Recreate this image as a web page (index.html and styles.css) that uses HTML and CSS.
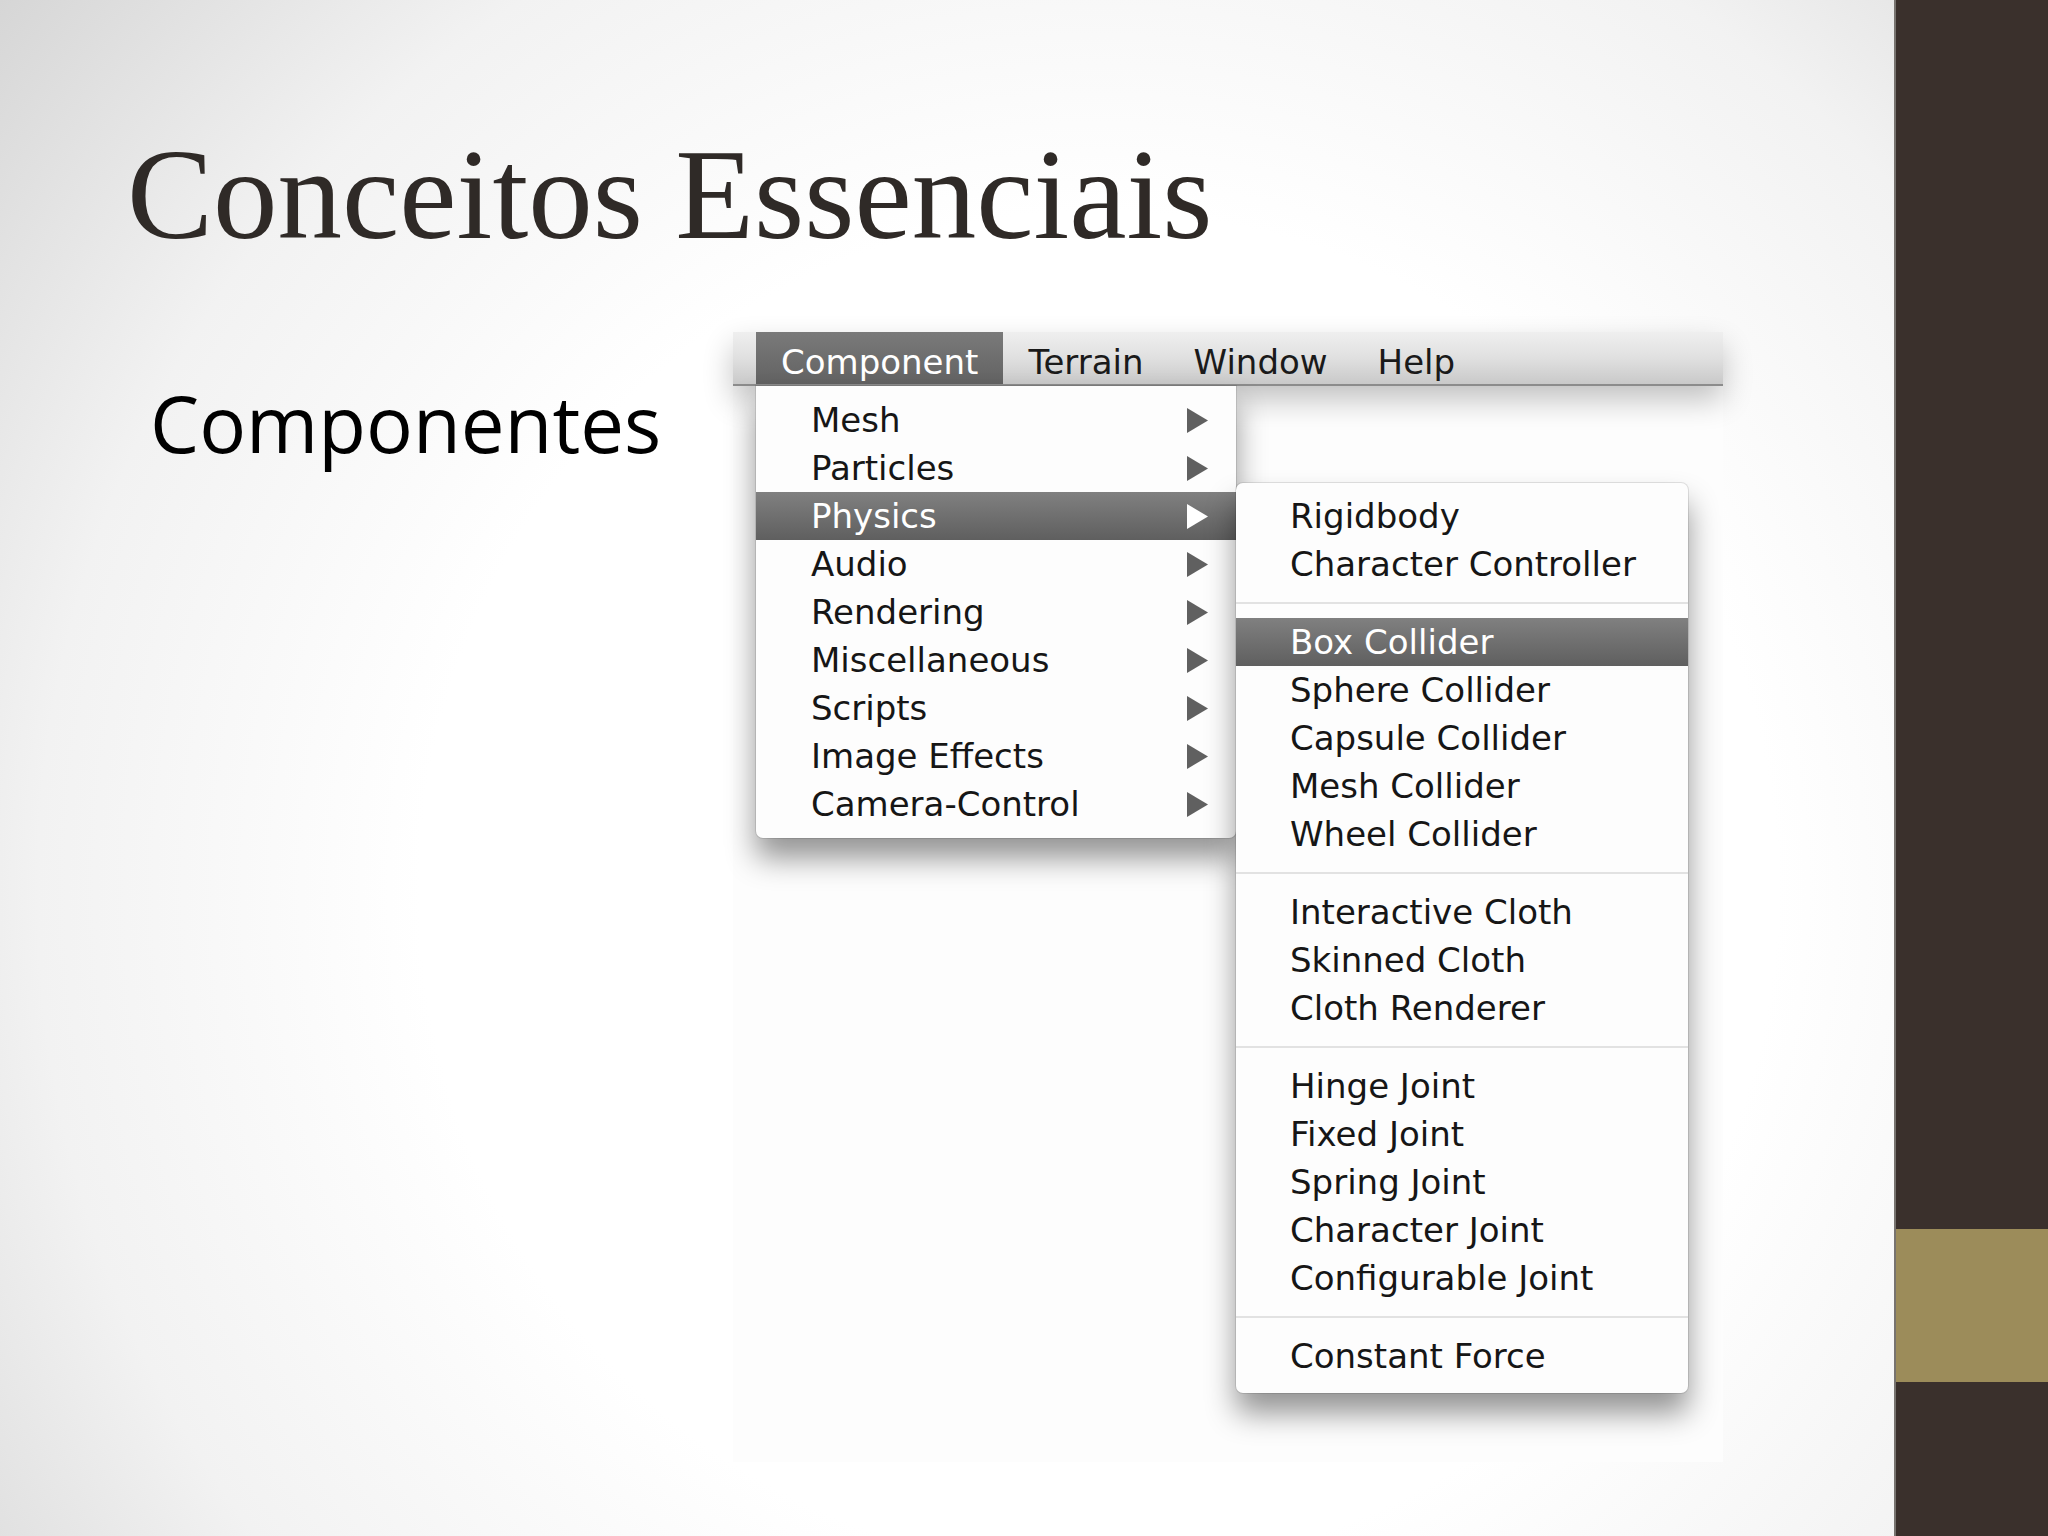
FILE: index.html
```html
<!DOCTYPE html>
<html lang="pt">
<head>
<meta charset="utf-8">
<title>Conceitos Essenciais</title>
<link rel="stylesheet" href="styles.css">
</head>
<body>
<div class="slide">
  <main class="content">
    <h1 class="title">Conceitos Essenciais</h1>
    <div class="body">
      <p class="bullet">Componentes</p>
      <div class="shot">
        <div class="menubar">
          <span class="mb-item active">Component</span>
          <span class="mb-item">Terrain</span>
          <span class="mb-item">Window</span>
          <span class="mb-item">Help</span>
        </div>
        <div class="menus">
          <ul class="menu dropdown">
            <li class="item">Mesh<svg class="arrow" viewBox="0 0 21 25"><polygon points="0,0 21,12.5 0,25"/></svg></li>
            <li class="item">Particles<svg class="arrow" viewBox="0 0 21 25"><polygon points="0,0 21,12.5 0,25"/></svg></li>
            <li class="item sel">Physics<svg class="arrow" viewBox="0 0 21 25"><polygon points="0,0 21,12.5 0,25"/></svg></li>
            <li class="item">Audio<svg class="arrow" viewBox="0 0 21 25"><polygon points="0,0 21,12.5 0,25"/></svg></li>
            <li class="item">Rendering<svg class="arrow" viewBox="0 0 21 25"><polygon points="0,0 21,12.5 0,25"/></svg></li>
            <li class="item">Miscellaneous<svg class="arrow" viewBox="0 0 21 25"><polygon points="0,0 21,12.5 0,25"/></svg></li>
            <li class="item">Scripts<svg class="arrow" viewBox="0 0 21 25"><polygon points="0,0 21,12.5 0,25"/></svg></li>
            <li class="item">Image Effects<svg class="arrow" viewBox="0 0 21 25"><polygon points="0,0 21,12.5 0,25"/></svg></li>
            <li class="item">Camera-Control<svg class="arrow" viewBox="0 0 21 25"><polygon points="0,0 21,12.5 0,25"/></svg></li>
          </ul>
          <ul class="menu submenu">
            <li class="item">Rigidbody</li>
            <li class="item">Character Controller</li>
            <li class="sep"></li>
            <li class="item sel">Box Collider</li>
            <li class="item">Sphere Collider</li>
            <li class="item">Capsule Collider</li>
            <li class="item">Mesh Collider</li>
            <li class="item">Wheel Collider</li>
            <li class="sep"></li>
            <li class="item">Interactive Cloth</li>
            <li class="item">Skinned Cloth</li>
            <li class="item">Cloth Renderer</li>
            <li class="sep"></li>
            <li class="item">Hinge Joint</li>
            <li class="item">Fixed Joint</li>
            <li class="item">Spring Joint</li>
            <li class="item">Character Joint</li>
            <li class="item">Configurable Joint</li>
            <li class="sep"></li>
            <li class="item">Constant Force</li>
          </ul>
        </div>
      </div>
    </div>
  </main>
  <aside class="side">
    <div class="gold"></div>
  </aside>
</div>
</body>
</html>
```
FILE: styles.css
```css
html, body {
  margin: 0;
  padding: 0;
}

body {
  width: 2048px;
  height: 1536px;
  overflow: hidden;
}

.slide {
  display: flex;
  width: 2048px;
  height: 1536px;
}

.content {
  flex: 0 0 1894px;
  height: 1536px;
  box-sizing: border-box;
  padding: 130px 0 0 127px;
  background: radial-gradient(circle farthest-corner at 58% 58%, #ffffff 0%, #ffffff 48%, #f2f2f2 75%, #d6d6d6 100%);
}

.title {
  margin: 0;
  font-family: "Liberation Serif", "Times New Roman", serif;
  font-weight: normal;
  font-size: 129px;
  line-height: 130px;
  color: #2f2a27;
  white-space: nowrap;
}

.body {
  display: flex;
  align-items: flex-start;
  margin-top: 72px;
}

.bullet {
  flex: 0 0 583px;
  margin: 44px 0 0 23px;
  font-family: "Open Sans", "Liberation Sans", sans-serif;
  font-size: 78px;
  line-height: 94px;
  color: #000;
}

/* screenshot of the Unity menu */
.shot {
  flex: 0 0 990px;
  height: 1130px;
  background: #fdfdfd;
  font-family: "DejaVu Sans", "Liberation Sans", sans-serif;
  font-size: 34px;
  color: #161616;
}

.menubar {
  display: flex;
  height: 54px;
  box-sizing: border-box;
  padding-left: 23px;
  background: linear-gradient(#efefef, #e0e0e0 50%, #c9c9c9);
  border-bottom: 2px solid #8c8c8c;
  box-shadow: 0 14px 30px rgba(0, 0, 0, 0.24);
}

.mb-item {
  padding: 8px 25px 0 25px;
  line-height: 44px;
  color: #1a1a1a;
}

.mb-item.active {
  background: linear-gradient(#7a7a7a, #626262);
  color: #fff;
}

.menus {
  display: flex;
  align-items: flex-start;
  position: relative;
  z-index: 1;
}

.menu {
  list-style: none;
  margin: 0;
  background: #fdfdfd;
  box-sizing: border-box;
}

.dropdown {
  width: 480px;
  margin-left: 23px;
  padding: 10px 0 10px 0;
  border-radius: 0 0 7px 7px;
  box-shadow: 0 20px 30px rgba(0, 0, 0, 0.42), 0 0 0 1px rgba(0, 0, 0, 0.1);
}

.submenu {
  width: 452px;
  margin-top: 97px;
  padding: 9px 0 13px 0;
  border-radius: 7px;
  box-shadow: 0 20px 30px rgba(0, 0, 0, 0.42), 0 0 0 1px rgba(0, 0, 0, 0.1);
  position: relative;
  z-index: 1;
}

.item {
  display: flex;
  align-items: center;
  justify-content: space-between;
  height: 48px;
  line-height: 48px;
  padding: 0 28px 0 55px;
  white-space: nowrap;
}

.submenu .item {
  padding-left: 54px;
}

.item.sel {
  background: linear-gradient(#808080, #5f5f5f);
  color: #fff;
}

.arrow {
  width: 21px;
  height: 25px;
  fill: #606060;
}

.item.sel .arrow {
  fill: #ffffff;
}

.sep {
  display: flex;
  align-items: center;
  height: 30px;
}

.sep::after {
  content: "";
  flex: 1;
  height: 2px;
  background: #e2e2e2;
}

/* right decorative bar */
.side {
  flex: 0 0 154px;
  height: 1536px;
  box-sizing: border-box;
  padding-top: 1229px;
  background: #3a302c;
  border-left: 2px solid #77736f;
}

.gold {
  height: 153px;
  background: #9c8c5a;
}
```
